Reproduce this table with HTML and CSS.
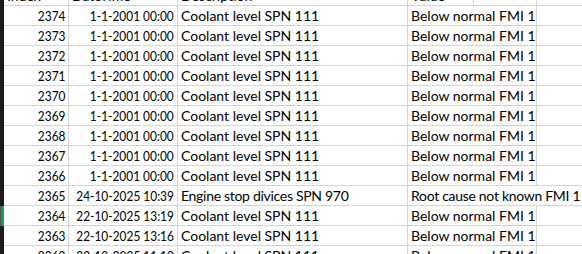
FILE: index.html
```html
<!DOCTYPE html>
<html>
<head>
<meta charset="utf-8">
<link rel="stylesheet" href="styles.css">
</head>
<body>
<div class="sheet">
  <div class="row head">
    <div class="rh"></div>
    <div class="c l">Index</div>
    <div class="c l">DateTime</div>
    <div class="c l">Description</div>
    <div class="c val l"><span>Value</span><span class="filt"></span></div>
    <div class="c last"></div>
  </div>
  <div class="row"><div class="rh"></div><div class="c n"><span>2374</span></div><div class="c n"><span>1-1-2001 00:00</span></div><div class="c l">Coolant level SPN 111</div><div class="c l">Below normal FMI 1</div><div class="c last"></div></div>
  <div class="row"><div class="rh"></div><div class="c n"><span>2373</span></div><div class="c n"><span>1-1-2001 00:00</span></div><div class="c l">Coolant level SPN 111</div><div class="c l">Below normal FMI 1</div><div class="c last"></div></div>
  <div class="row"><div class="rh"></div><div class="c n"><span>2372</span></div><div class="c n"><span>1-1-2001 00:00</span></div><div class="c l">Coolant level SPN 111</div><div class="c l">Below normal FMI 1</div><div class="c last"></div></div>
  <div class="row"><div class="rh"></div><div class="c n"><span>2371</span></div><div class="c n"><span>1-1-2001 00:00</span></div><div class="c l">Coolant level SPN 111</div><div class="c l">Below normal FMI 1</div><div class="c last"></div></div>
  <div class="row"><div class="rh"></div><div class="c n"><span>2370</span></div><div class="c n"><span>1-1-2001 00:00</span></div><div class="c l">Coolant level SPN 111</div><div class="c l">Below normal FMI 1</div><div class="c last"></div></div>
  <div class="row"><div class="rh"></div><div class="c n"><span>2369</span></div><div class="c n"><span>1-1-2001 00:00</span></div><div class="c l">Coolant level SPN 111</div><div class="c l">Below normal FMI 1</div><div class="c last"></div></div>
  <div class="row"><div class="rh"></div><div class="c n"><span>2368</span></div><div class="c n"><span>1-1-2001 00:00</span></div><div class="c l">Coolant level SPN 111</div><div class="c l">Below normal FMI 1</div><div class="c last"></div></div>
  <div class="row"><div class="rh"></div><div class="c n"><span>2367</span></div><div class="c n"><span>1-1-2001 00:00</span></div><div class="c l">Coolant level SPN 111</div><div class="c l">Below normal FMI 1</div><div class="c last"></div></div>
  <div class="row"><div class="rh"></div><div class="c n"><span>2366</span></div><div class="c n"><span>1-1-2001 00:00</span></div><div class="c l">Coolant level SPN 111</div><div class="c l">Below normal FMI 1</div><div class="c last"></div></div>
  <div class="row"><div class="rh"></div><div class="c n"><span>2365</span></div><div class="c n"><span>24-10-2025 10:39</span></div><div class="c l tight">Engine stop divices SPN 970</div><div class="c l over tight">Root cause not known FMI 1</div><div class="c last"></div></div>
  <div class="row sel"><div class="rh"></div><div class="c n"><span>2364</span></div><div class="c n"><span>22-10-2025 13:19</span></div><div class="c l">Coolant level SPN 111</div><div class="c l">Below normal FMI 1</div><div class="c last"></div></div>
  <div class="row"><div class="rh"></div><div class="c n"><span>2363</span></div><div class="c n"><span>22-10-2025 13:16</span></div><div class="c l">Coolant level SPN 111</div><div class="c l">Below normal FMI 1</div><div class="c last"></div></div>
  <div class="row"><div class="rh"></div><div class="c n"><span>2362</span></div><div class="c n"><span>22-10-2025 11:10</span></div><div class="c l">Coolant level SPN 111</div><div class="c l">Below normal FMI 1</div><div class="c last"></div></div>
</div>
</body>
</html>
```

FILE: styles.css
```css
html, body {
  margin: 0;
  padding: 0;
  background: #ffffff;
  overflow: hidden;
}
body {
  width: 582px;
  height: 254px;
  font-family: "Lato", "Open Sans", sans-serif;
  font-size: 14px;
  color: #000;
}
.sheet {
  margin-top: -14px;
}
.row {
  display: grid;
  grid-template-columns: 4px 65px 109px 230px 129px 1fr;
  height: 20px;
}
.rh {
  background: #1c1c1c;
}
.sel .rh {
  background: #5e5e5e;
  box-shadow: inset -2px 0 0 #21a366;
}
.c {
  border-right: 1px solid #d4d4d4;
  border-bottom: 1px solid #d4d4d4;
  white-space: nowrap;
  line-height: 19px;
  height: 19px;
  padding: 0 3px;
  text-align: left;
}
.c.n {
  display: flex;
  justify-content: flex-end;
}
.c.n span {
  display: inline-block;
  flex-shrink: 0;
  transform: scaleX(0.85);
  transform-origin: 100% 50%;
}
.c.last {
  border-right: none;
}
.c.tight {
  letter-spacing: -0.3px;
}
.c.over {
  border-right-color: transparent;
  overflow: visible;
}
.val {
  display: flex;
  padding-right: 0;
}
.val span:first-child {
  width: 62px;
}
.filt {
  width: 1px;
  background: #d4d4d4;
}
```
